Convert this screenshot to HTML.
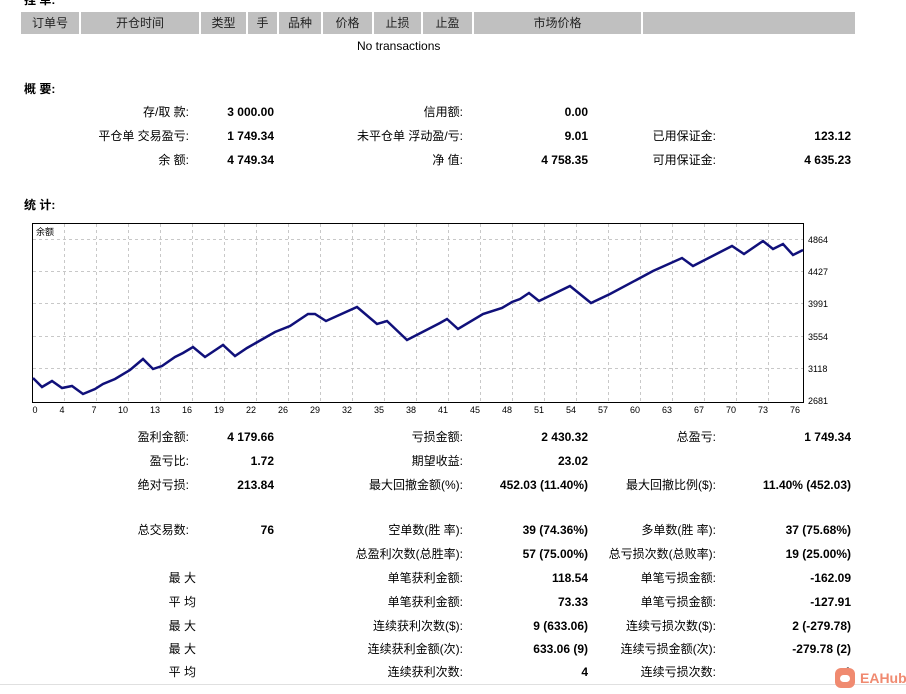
<!DOCTYPE html>
<html><head><meta charset="utf-8"><style>
body{margin:0;width:906px;height:694px;background:#fff;position:relative;overflow:hidden;font-family:"Liberation Sans","Noto Sans CJK SC",sans-serif;font-size:12px;color:#000}
.a{position:absolute;white-space:nowrap;line-height:14px;margin-top:1px}
.r{text-align:right}
.b{font-weight:bold}
.hd{position:absolute;top:12px;height:22px;background:#c0c0c0;color:#222;text-align:center;line-height:22px;font-size:12px}
</style></head><body>
<div class="a b" style="left:24px;top:-8px">挂 单:</div>
<div class="hd" style="left:21px;width:58px">订单号</div>
<div class="hd" style="left:81px;width:118px">开仓时间</div>
<div class="hd" style="left:201px;width:45px">类型</div>
<div class="hd" style="left:248px;width:29px">手</div>
<div class="hd" style="left:279px;width:42px">品种</div>
<div class="hd" style="left:323px;width:49px">价格</div>
<div class="hd" style="left:374px;width:47px">止损</div>
<div class="hd" style="left:423px;width:49px">止盈</div>
<div class="hd" style="left:474px;width:167px">市场价格</div>
<div class="hd" style="left:643px;width:212px"></div>
<div class="a" style="left:357px;top:38px">No transactions</div>
<div class="a b" style="left:24px;top:81px">概 要:</div>
<div class="a b" style="left:24px;top:197px">统 计:</div>

<svg style="position:absolute;left:0;top:0" width="906" height="420">
<rect x="32.5" y="223.5" width="771" height="179" fill="#fff" stroke="#000"/>
<g stroke="#c8c8c8" stroke-dasharray="3,3" stroke-width="1">
<line x1="33" y1="239.5" x2="803" y2="239.5"/><line x1="33" y1="271.5" x2="803" y2="271.5"/><line x1="33" y1="303.5" x2="803" y2="303.5"/><line x1="33" y1="336.5" x2="803" y2="336.5"/><line x1="33" y1="368.5" x2="803" y2="368.5"/>
<line x1="64.5" y1="224" x2="64.5" y2="402"/><line x1="96.5" y1="224" x2="96.5" y2="402"/><line x1="128.5" y1="224" x2="128.5" y2="402"/><line x1="160.5" y1="224" x2="160.5" y2="402"/><line x1="192.5" y1="224" x2="192.5" y2="402"/><line x1="224.5" y1="224" x2="224.5" y2="402"/><line x1="256.5" y1="224" x2="256.5" y2="402"/><line x1="288.5" y1="224" x2="288.5" y2="402"/><line x1="320.5" y1="224" x2="320.5" y2="402"/><line x1="352.5" y1="224" x2="352.5" y2="402"/><line x1="384.5" y1="224" x2="384.5" y2="402"/><line x1="416.5" y1="224" x2="416.5" y2="402"/><line x1="448.5" y1="224" x2="448.5" y2="402"/><line x1="480.5" y1="224" x2="480.5" y2="402"/><line x1="512.5" y1="224" x2="512.5" y2="402"/><line x1="544.5" y1="224" x2="544.5" y2="402"/><line x1="576.5" y1="224" x2="576.5" y2="402"/><line x1="608.5" y1="224" x2="608.5" y2="402"/><line x1="640.5" y1="224" x2="640.5" y2="402"/><line x1="672.5" y1="224" x2="672.5" y2="402"/><line x1="704.5" y1="224" x2="704.5" y2="402"/><line x1="736.5" y1="224" x2="736.5" y2="402"/><line x1="768.5" y1="224" x2="768.5" y2="402"/>
</g>
<polyline fill="none" stroke="#10107a" stroke-width="2.5" points="33,378 42,387 52,381 62,388 72,386 83,394 95,389 103,384 115,379 130,370 143,359 153,369 162,366 175,357 183,353 193,347 205,357 223,345 235,356 247,348 275,332 290,326 308,314 315,314 326,321 357,307 377,324 387,321 407,340 440,323 447,319 458,329 483,314 502,308 512,302 520,299 529,293 539,301 570,286 591,303 610,294 640,278 653,271 682,258 693,266 732,246 744,254 763,241 773,249 783,244 793,255 803,250"/>
<g font-size="9" font-family="Liberation Sans,sans-serif" fill="#000">
<text x="36" y="235">余额</text>
<text x="808" y="243">4864</text><text x="808" y="275">4427</text><text x="808" y="307">3991</text><text x="808" y="340">3554</text><text x="808" y="372">3118</text><text x="808" y="404">2681</text>
<g text-anchor="middle">
<text x="35" y="413">0</text><text x="62" y="413">4</text><text x="94" y="413">7</text><text x="123" y="413">10</text><text x="155" y="413">13</text><text x="187" y="413">16</text><text x="219" y="413">19</text><text x="251" y="413">22</text><text x="283" y="413">26</text><text x="315" y="413">29</text><text x="347" y="413">32</text><text x="379" y="413">35</text><text x="411" y="413">38</text><text x="443" y="413">41</text><text x="475" y="413">45</text><text x="507" y="413">48</text><text x="539" y="413">51</text><text x="571" y="413">54</text><text x="603" y="413">57</text><text x="635" y="413">60</text><text x="667" y="413">63</text><text x="699" y="413">67</text><text x="731" y="413">70</text><text x="763" y="413">73</text><text x="795" y="413">76</text>
</g></g>
</svg>

<div class="a r" style="right:717px;top:104px">存/取 款:</div><div class="a r b" style="right:632px;top:104px">3 000.00</div>
<div class="a r" style="right:443px;top:104px">信用额:</div><div class="a r b" style="right:318px;top:104px">0.00</div>
<div class="a r" style="right:717px;top:128px">平仓单 交易盈亏:</div><div class="a r b" style="right:632px;top:128px">1 749.34</div>
<div class="a r" style="right:443px;top:128px">未平仓单 浮动盈/亏:</div><div class="a r b" style="right:318px;top:128px">9.01</div>
<div class="a r" style="right:190px;top:128px">已用保证金:</div><div class="a r b" style="right:55px;top:128px">123.12</div>
<div class="a r" style="right:717px;top:152px">余 额:</div><div class="a r b" style="right:632px;top:152px">4 749.34</div>
<div class="a r" style="right:443px;top:152px">净 值:</div><div class="a r b" style="right:318px;top:152px">4 758.35</div>
<div class="a r" style="right:190px;top:152px">可用保证金:</div><div class="a r b" style="right:55px;top:152px">4 635.23</div>

<div class="a r" style="right:717px;top:429px">盈利金额:</div><div class="a r b" style="right:632px;top:429px">4 179.66</div>
<div class="a r" style="right:443px;top:429px">亏损金额:</div><div class="a r b" style="right:318px;top:429px">2 430.32</div>
<div class="a r" style="right:190px;top:429px">总盈亏:</div><div class="a r b" style="right:55px;top:429px">1 749.34</div>
<div class="a r" style="right:717px;top:453px">盈亏比:</div><div class="a r b" style="right:632px;top:453px">1.72</div>
<div class="a r" style="right:443px;top:453px">期望收益:</div><div class="a r b" style="right:318px;top:453px">23.02</div>
<div class="a r" style="right:717px;top:477px">绝对亏损:</div><div class="a r b" style="right:632px;top:477px">213.84</div>
<div class="a r" style="right:443px;top:477px">最大回撤金额(%):</div><div class="a r b" style="right:318px;top:477px">452.03 (11.40%)</div>
<div class="a r" style="right:190px;top:477px">最大回撤比例($):</div><div class="a r b" style="right:55px;top:477px">11.40% (452.03)</div>

<div class="a r" style="right:717px;top:522px">总交易数:</div><div class="a r b" style="right:632px;top:522px">76</div>
<div class="a r" style="right:443px;top:522px">空单数(胜 率):</div><div class="a r b" style="right:318px;top:522px">39 (74.36%)</div>
<div class="a r" style="right:190px;top:522px">多单数(胜 率):</div><div class="a r b" style="right:55px;top:522px">37 (75.68%)</div>
<div class="a r" style="right:443px;top:546px">总盈利次数(总胜率):</div><div class="a r b" style="right:318px;top:546px">57 (75.00%)</div>
<div class="a r" style="right:190px;top:546px">总亏损次数(总败率):</div><div class="a r b" style="right:55px;top:546px">19 (25.00%)</div>
<div class="a r" style="right:710px;top:570px">最 大</div>
<div class="a r" style="right:443px;top:570px">单笔获利金额:</div><div class="a r b" style="right:318px;top:570px">118.54</div>
<div class="a r" style="right:190px;top:570px">单笔亏损金额:</div><div class="a r b" style="right:55px;top:570px">-162.09</div>
<div class="a r" style="right:710px;top:594px">平 均</div>
<div class="a r" style="right:443px;top:594px">单笔获利金额:</div><div class="a r b" style="right:318px;top:594px">73.33</div>
<div class="a r" style="right:190px;top:594px">单笔亏损金额:</div><div class="a r b" style="right:55px;top:594px">-127.91</div>
<div class="a r" style="right:710px;top:618px">最 大</div>
<div class="a r" style="right:443px;top:618px">连续获利次数($):</div><div class="a r b" style="right:318px;top:618px">9 (633.06)</div>
<div class="a r" style="right:190px;top:618px">连续亏损次数($):</div><div class="a r b" style="right:55px;top:618px">2 (-279.78)</div>
<div class="a r" style="right:710px;top:641px">最 大</div>
<div class="a r" style="right:443px;top:641px">连续获利金额(次):</div><div class="a r b" style="right:318px;top:641px">633.06 (9)</div>
<div class="a r" style="right:190px;top:641px">连续亏损金额(次):</div><div class="a r b" style="right:55px;top:641px">-279.78 (2)</div>
<div class="a r" style="right:710px;top:664px">平 均</div>
<div class="a r" style="right:443px;top:664px">连续获利次数:</div><div class="a r b" style="right:318px;top:664px">4</div>
<div class="a r" style="right:190px;top:664px">连续亏损次数:</div><div class="a r b" style="right:55px;top:664px">1</div>

<div style="position:absolute;left:0;top:684px;width:906px;height:1px;background:#e0e0e0"></div>
<div style="position:absolute;left:835px;top:668px;width:20px;height:20px;border-radius:6px;background:#f08a70"></div>
<div style="position:absolute;left:840px;top:675px;width:10px;height:7px;border-radius:4px;background:#fff"></div>
<div class="a" style="left:860px;top:670px;color:#f08a70;font-size:14px;font-weight:bold">EAHub</div>
</body></html>
